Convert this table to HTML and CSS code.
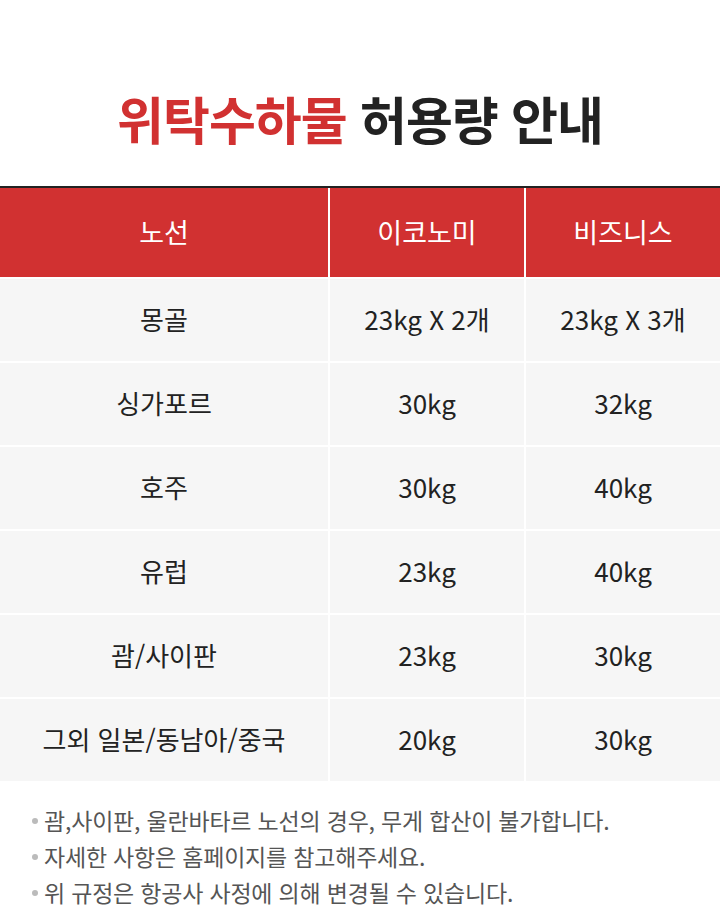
FILE: index.html
```html
<!DOCTYPE html>
<html lang="ko">
<head>
<meta charset="utf-8">
<link rel="stylesheet" href="styles.css">
</head>
<body>
<div class="page">
  <h1 class="title"><span class="accent">위탁수하물</span> 허용량 안내</h1>
  <div class="table">
    <div class="th">노선</div><div class="th">이코노미</div><div class="th">비즈니스</div>
    <div class="td">몽골</div><div class="td">23kg X 2개</div><div class="td">23kg X 3개</div>
    <div class="td">싱가포르</div><div class="td">30kg</div><div class="td">32kg</div>
    <div class="td">호주</div><div class="td">30kg</div><div class="td">40kg</div>
    <div class="td">유럽</div><div class="td">23kg</div><div class="td">40kg</div>
    <div class="td">괌/사이판</div><div class="td">23kg</div><div class="td">30kg</div>
    <div class="td">그외 일본/동남아/중국</div><div class="td">20kg</div><div class="td">30kg</div>
  </div>
  <ul class="notes">
    <li>괌,사이판, 울란바타르 노선의 경우, 무게 합산이 불가합니다.</li>
    <li>자세한 사항은 홈페이지를 참고해주세요.</li>
    <li>위 규정은 항공사 사정에 의해 변경될 수 있습니다.</li>
  </ul>
</div>
</body>
</html>
```
FILE: styles.css
```css
* { box-sizing: border-box; }
html, body { margin: 0; padding: 0; background: #fff; }
body { font-family: "Noto Sans CJK KR", "Noto Sans", sans-serif; color: #222; }
.page { width: 720px; }
.title {
  margin: 0;
  padding: 86px 0 36px;
  height: 188px;
  line-height: 64px;
  text-align: center;
  font-size: 51px;
  font-weight: 700;
  letter-spacing: -1px;
  color: #222;
  border-bottom: 2px solid #222;
}
.accent { color: #d13131; }
.table {
  display: grid;
  grid-template-columns: 328px 194px 194px;
  grid-template-rows: 89px;
  grid-auto-rows: 82px;
  column-gap: 2px;
  row-gap: 2px;
  background: #fff;
}
.th, .td {
  display: flex;
  align-items: center;
  justify-content: center;
  font-size: 26px;
  font-weight: 400;
  letter-spacing: 0;
  padding-bottom: 3px;
}
.th {
  background: #d13131;
  color: #fff;
  font-size: 27px;
}
.td { background: #f6f6f6; color: #222; }
.notes {
  list-style: none;
  margin: 0;
  padding: 21px 0 0 44px;
}
.notes li {
  position: relative;
  font-size: 23px;
  line-height: 36px;
  color: #555;
  letter-spacing: -0.2px;
}
.notes li::before {
  content: "";
  position: absolute;
  left: -12px;
  top: 16px;
  width: 6px;
  height: 6px;
  border-radius: 50%;
  background: #bbb;
}
```
